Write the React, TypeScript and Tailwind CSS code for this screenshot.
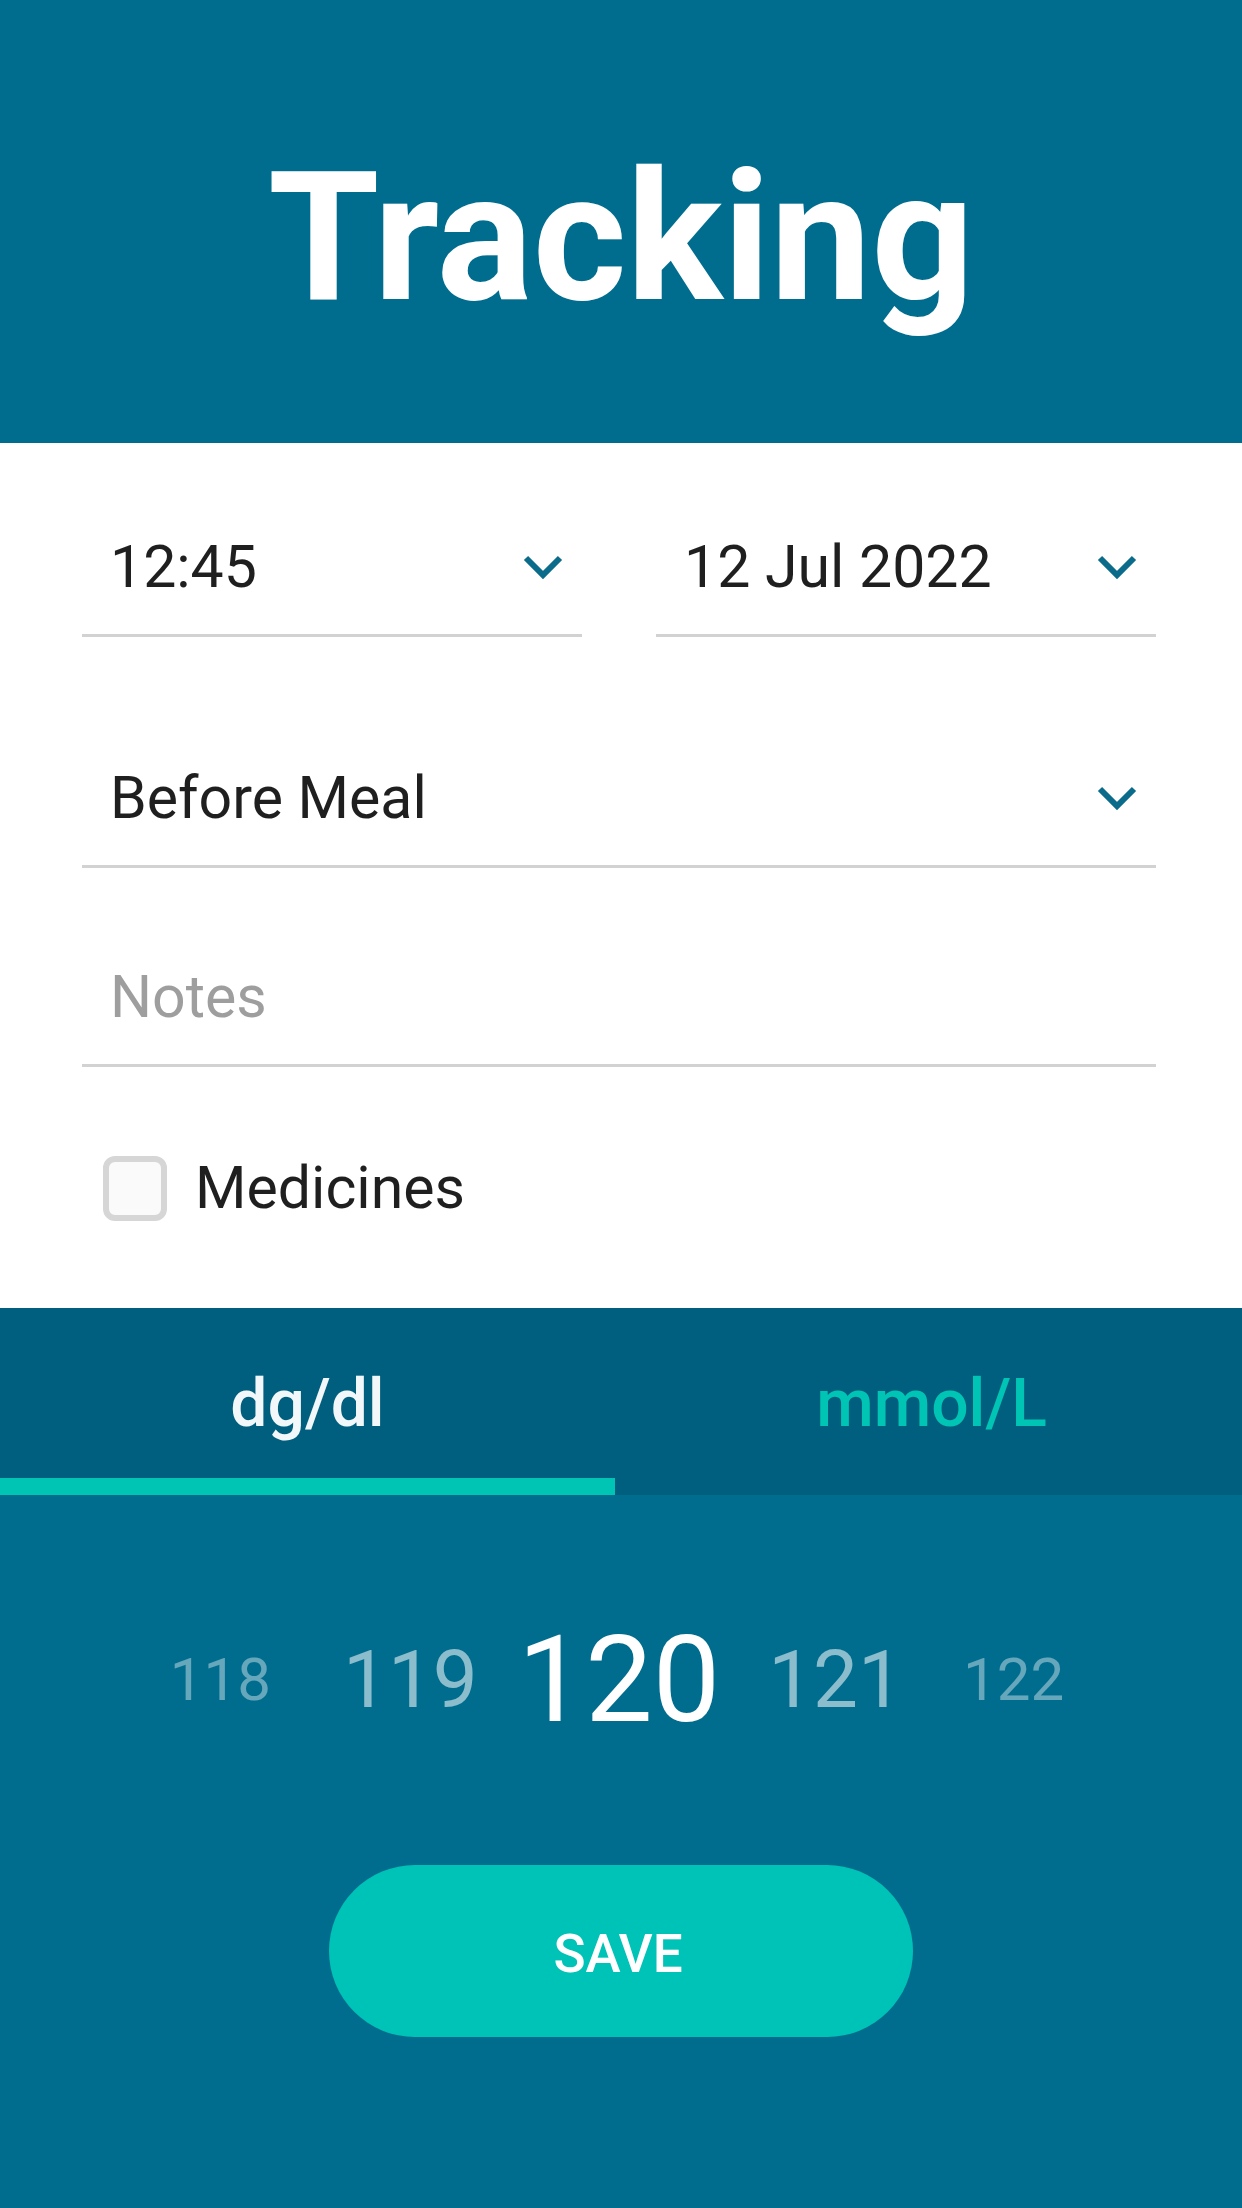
const font = { fontFamily: "Roboto, 'Liberation Sans', sans-serif" };

function Chevron() {
  return (
    <svg width="40" height="24" viewBox="0 0 40 24" fill="none">
      <polyline points="3,3 20,20 37,3" stroke="#0b6b8b" strokeWidth="6" />
    </svg>
  );
}

function Field({ value, placeholder, dropdown }: { value?: string; placeholder?: string; dropdown?: boolean }) {
  return (
    <div className="flex items-center justify-between border-b-[3px] border-[#d2d2d2] pb-[33px] pl-[28px] pr-[19px]">
      {value ? (
        <span className="text-[59px] leading-[68px] text-[#1f1f1f]">{value}</span>
      ) : (
        <span className="text-[59px] leading-[68px] text-[#9e9e9e]">{placeholder}</span>
      )}
      {dropdown && <Chevron />}
    </div>
  );
}

export default function App() {
  return (
    <div className="min-h-screen w-[1242px] bg-[#006d8f]" style={font}>
      {/* Header */}
      <div className="h-[443px] pt-[148px] text-center">
        <h1 className="text-[180px] font-bold leading-none text-white">Tracking</h1>
      </div>

      {/* Form */}
      <div className="bg-white pl-[82px] pr-[86px] pt-[90px] pb-[86px]">
        <div className="grid grid-cols-2 gap-[74px]">
          <Field value="12:45" dropdown />
          <Field value="12 Jul 2022" dropdown />
        </div>
        <div className="mt-[127px]">
          <Field value="Before Meal" dropdown />
        </div>
        <div className="mt-[95px]">
          <Field placeholder="Notes" />
        </div>
        <div className="mt-[87px] flex items-center pl-[21px]">
          <div className="h-[65px] w-[64px] rounded-[12px] border-[6px] border-[#d6d6d6] bg-[#fafafa]" />
          <span className="ml-[28px] text-[59px] leading-[68px] text-[#1f1f1f]">Medicines</span>
        </div>
      </div>

      {/* Units tabs */}
      <div className="flex h-[187px] bg-[#005f7f]">
        <div className="flex w-[615px] flex-col">
          <div className="flex-1 pt-[63px] text-center text-[66px] font-medium leading-none text-[#f2f8fa]">dg/dl</div>
          <div className="h-[17px] bg-[#00c4b4]" />
        </div>
        <div className="flex-1 pt-[63px] pl-[6px] text-center text-[66px] font-medium leading-none text-[#00c4b4]">mmol/L</div>
      </div>

      {/* Value picker */}
      <div className="flex h-[243px] items-center justify-center pt-[126px] pr-[8px]">
        <span className="text-[60px] leading-none text-white/40">118</span>
        <span className="ml-[72px] text-[80px] leading-none text-white/55">119</span>
        <span className="ml-[40px] text-[120px] leading-none text-white">120</span>
        <span className="ml-[48px] text-[80px] leading-none text-white/55">121</span>
        <span className="ml-[60px] text-[60px] leading-none text-white/40">122</span>
      </div>

      <div className="flex justify-center pt-[127px] pb-[171px]">
        <button className="flex h-[172px] w-[584px] items-center justify-center rounded-full bg-[#00c3b7] pt-[8px] pr-[6px] text-[53px] font-medium text-white">
          SAVE
        </button>
      </div>
    </div>
  );
}
